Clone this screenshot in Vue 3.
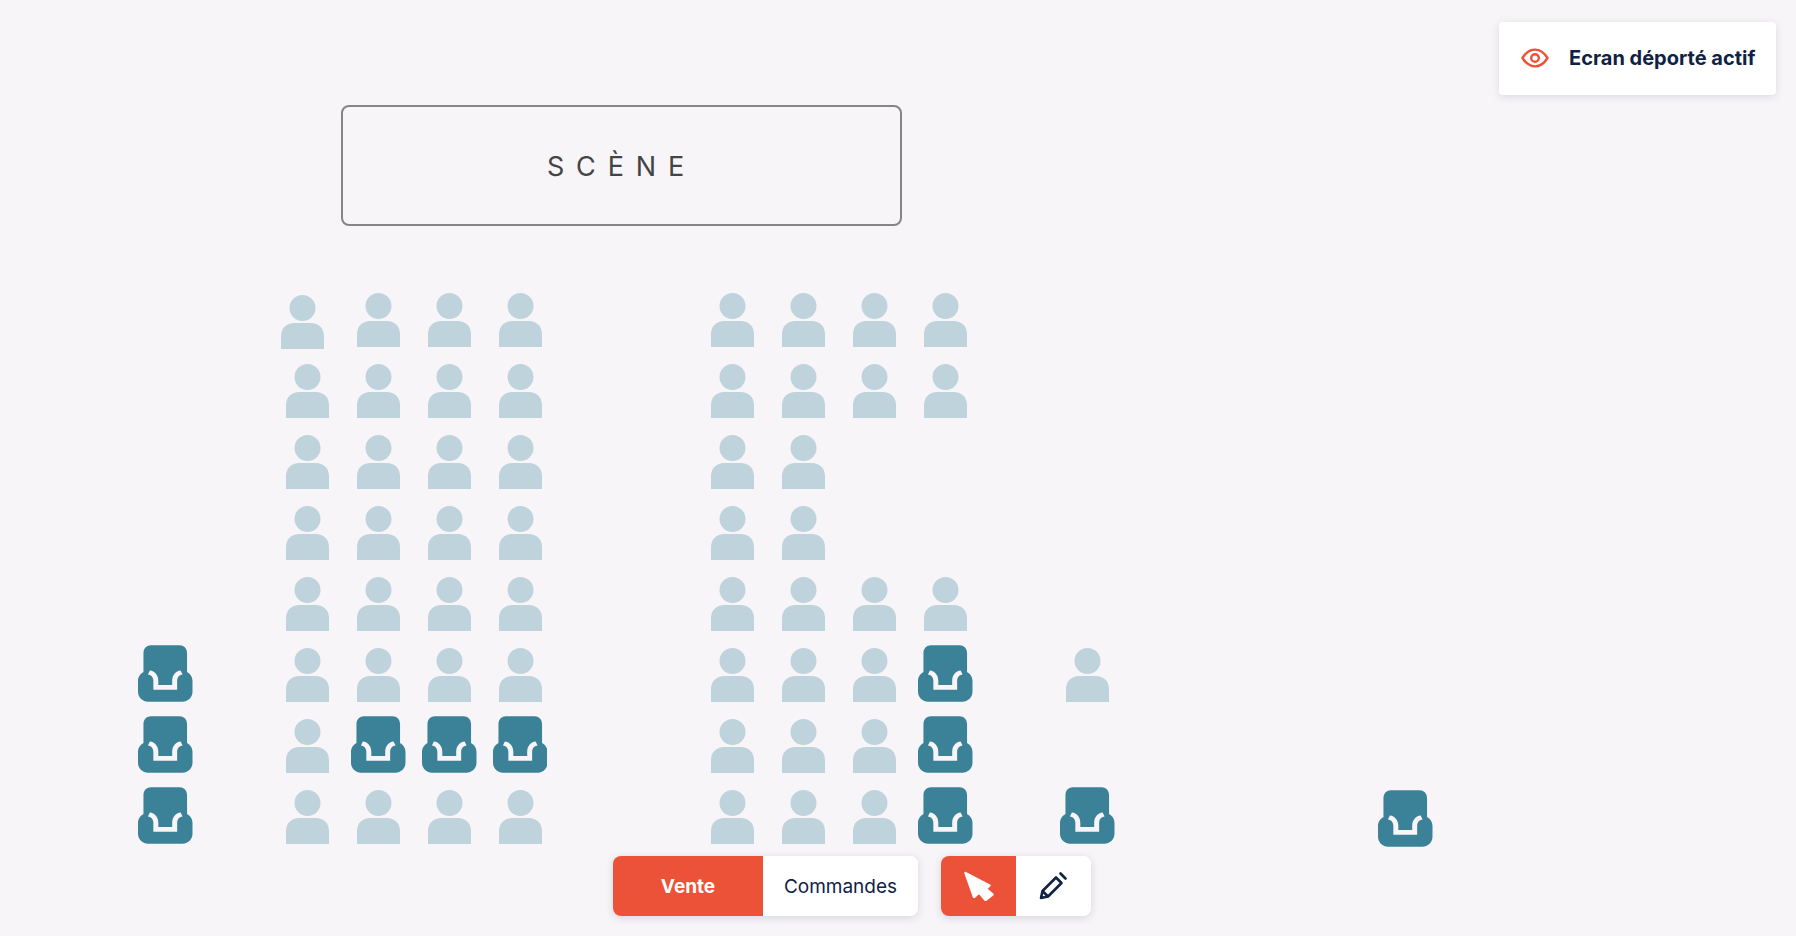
<template>
  <div class="page">
    <div class="remote-badge">
      <svg class="eye" viewBox="0 0 28 20" fill="none" stroke="#ec5237" stroke-width="2.4">
        <path d="M1.500 10C5 4.300 9 1.600 14 1.600S23 4.300 26.500 10C23 15.700 19 18.400 14 18.400S5 15.700 1.500 10Z" stroke-linejoin="round" />
        <circle cx="14" cy="10" r="3.800" />
      </svg>
      <span>Ecran déporté actif</span>
    </div>

    <div class="stage"><span>SCÈNE</span></div>

    <div class="seat-map">
      <svg
        v-for="seat in seats"
        :key="seat.id"
        :class="seat.type === 'chair' ? 'chair' : 'person'"
        :style="{ left: seat.x + 'px', top: seat.y + 'px' }"
        :viewBox="seat.type === 'chair' ? '0 0 55 57' : '0 0 43 54'"
      >
        <template v-if="seat.type === 'chair'">
          <path fill="#3b8299" d="M5.500 8C5.500 3 9 0 13 0H42C46 0 49.500 3 49.500 8V27C52.500 28.500 55 32 55 36V47C55 53 50 57 45 57H10C5 57 0 53 0 47V36C0 32 2.500 28.500 5.500 27Z" />
          <path fill="#f7f5f8" d="M10 29.500L12 25.500C17 26 20.500 30 20.500 36V40H34.500V36C34.500 30 38 26 43 25.500L45 29.500C41.500 30 39.500 32.500 39.500 36V45H15.500V36C15.500 32.500 13.500 30 10 29.500Z" />
        </template>
        <template v-else>
          <circle fill="#bfd3dc" cx="21.500" cy="13" r="13" />
          <path fill="#bfd3dc" d="M0 54V41C0 33 6 28 13 28H30C37 28 43 33 43 41V54Z" />
        </template>
      </svg>
    </div>

    <div class="toolbar">
      <div class="segmented">
        <button class="seg seg-text active"><b>Vente</b></button>
        <button class="seg seg-text">Commandes</button>
      </div>
      <div class="segmented">
        <button class="seg seg-icon active">
          <svg width="30" height="30" viewBox="0 0 30 30">
            <path fill="#fff" stroke="#fff" stroke-width="2.400" stroke-linejoin="round" d="M1.500 2L25.500 14.500L22 18L28.500 23.500L21.500 29L15 21.500L10 26Z" />
          </svg>
        </button>
        <button class="seg seg-icon">
          <svg width="30" height="30" viewBox="0 0 30 30" fill="none" stroke="#0f2244" stroke-width="2.600" stroke-linejoin="round" stroke-linecap="round">
            <path d="M2 27L3.500 20L17 6.500L22.500 12L9 25.500Z" />
            <path d="M4 20.500L8.500 25" />
            <path d="M21.500 2.500L26.500 7.500" />
          </svg>
        </button>
      </div>
    </div>
  </div>
</template>

<script setup>
const rowY = [293, 364, 435, 506, 577, 648, 719, 790]
const colX = [286, 357, 428, 498.6, 711, 782, 853, 924]

// which columns hold a seat on each row, c marks an armchair
const layout = [
  'pppp pppp',
  'pppp pppp',
  'pppp pp',
  'pppp pp',
  'pppp pppp',
  'pppp pppc',
  'pccc pppc',
  'pppp pppc',
]

const seats = []
layout.forEach((row, r) => {
  row.replace(' ', '').split('').forEach((kind, c) => {
    const chair = kind === 'c'
    seats.push({
      id: `${r}-${c}`,
      type: chair ? 'chair' : 'person',
      x: chair ? colX[c] - 6 : colX[c],
      y: chair ? rowY[r] - 3 : rowY[r],
    })
  })
})

// the first seat of the plan has been nudged out of line
seats[0].x -= 5
seats[0].y += 2

const extra = [
  { type: 'chair', x: 138, y: 645 },
  { type: 'chair', x: 138, y: 716 },
  { type: 'chair', x: 138, y: 787 },
  { type: 'person', x: 1066, y: 648 },
  { type: 'chair', x: 1060, y: 787 },
  { type: 'chair', x: 1378, y: 790 },
]
extra.forEach((seat, i) => seats.push({ ...seat, id: `extra-${i}` }))
</script>

<style>
html,
body {
  margin: 0;
  background: #f7f5f8;
}
</style>

<style scoped>
.page {
  position: relative;
  width: 1796px;
  height: 936px;
  overflow: hidden;
  background: #f7f5f8;
  font-family: Inter, "Liberation Sans", sans-serif;
  color: #0f2244;
}

.remote-badge {
  position: absolute;
  top: 22px;
  right: 20px;
  box-sizing: border-box;
  width: 277px;
  height: 73px;
  padding: 0 0 1px 22px;
  display: flex;
  align-items: center;
  gap: 20px;
  background: #fff;
  border-radius: 4px;
  box-shadow: 0 2px 8px rgba(20, 30, 60, 0.12);
  font-size: 20px;
  font-weight: 700;
  white-space: nowrap;
}

.eye {
  width: 28px;
  height: 20px;
  flex: none;
}

.stage {
  position: absolute;
  left: 341px;
  top: 105px;
  box-sizing: border-box;
  width: 561px;
  height: 121px;
  display: flex;
  align-items: center;
  justify-content: center;
  border: 2px solid #858585;
  border-radius: 8px;
  color: #444;
  font-size: 27px;
  letter-spacing: 0.44em;
}

.stage span {
  padding-top: 2px;
}

.seat-map {
  position: absolute;
  inset: 0;
}

.person {
  position: absolute;
  width: 43px;
  height: 54px;
}

.chair {
  position: absolute;
  width: 54.5px;
  height: 57px;
}

.toolbar {
  position: absolute;
  left: 613px;
  top: 856px;
  display: flex;
  gap: 23px;
}

.segmented {
  display: flex;
  height: 60px;
  border-radius: 8px;
  overflow: hidden;
  background: #fff;
  box-shadow: 0 2px 8px rgba(20, 30, 60, 0.14);
}

.seg {
  display: flex;
  align-items: center;
  justify-content: center;
  height: 60px;
  padding: 0;
  border: 0;
  background: #fff;
  color: #0f2244;
  font: inherit;
  font-size: 19px;
}

.seg-text {
  width: 155px;
}

.seg-text.active {
  width: 150px;
}

.seg-icon {
  width: 75px;
}

.active {
  background: #ec5237;
  color: #fff;
}
</style>
